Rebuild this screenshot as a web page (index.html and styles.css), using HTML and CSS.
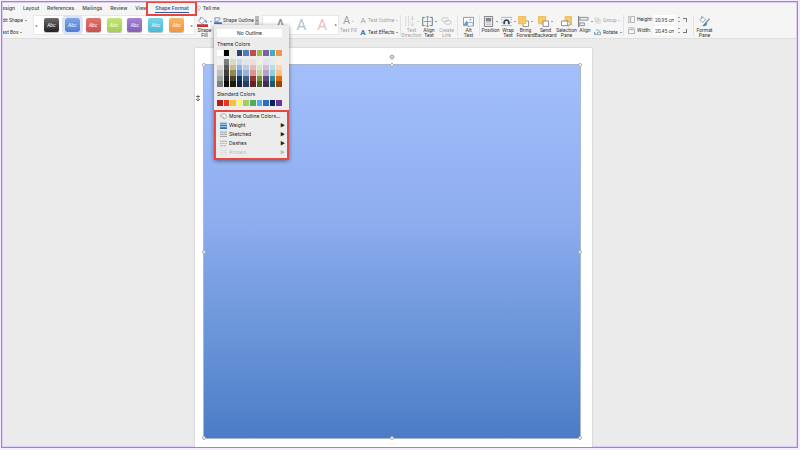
FILE: index.html
```html
<!DOCTYPE html>
<html lang="en">
<head>
<meta charset="utf-8">
<title>Shape Format</title>
<link rel="stylesheet" href="styles.css">
</head>
<body>
<div class="window">
  <nav class="tabs">
    <a href="#">esign</a><a href="#">Layout</a><a href="#">References</a><a href="#">Mailings</a><a href="#">Review</a><a href="#">View</a><a href="#" class="active">Shape Format</a><a href="#" class="tell"><svg class="bulb" viewBox="0 0 6 8"><path d="M2 6C2 4 .8 4 .8 2.500a2.200 2.200 0 0 1 4.400 0C5.200 4 4 4 4 6zM2 7h2" fill="none" stroke="#999" stroke-width=".7"/></svg>Tell me</a>
  </nav>
  <div class="toolbar">
    <div class="stack edit"><button>dit Shape <i class="caret"></i></button><button>ext Box <i class="caret"></i></button></div>
    <div class="gallery styles">
      <button class="arrow" aria-label="Previous">◂</button>
      <button class="style black">Abc</button><button class="style blue chosen">Abc</button><button class="style red">Abc</button><button class="style green">Abc</button><button class="style purple">Abc</button><button class="style aqua">Abc</button><button class="style orange">Abc</button>
      <button class="arrow" aria-label="Next">▸</button>
    </div>
    <button class="tool"><span class="pic"><svg viewBox="0 0 12 12"><path d="M5 1l4 4-4 3.500-3.500-3.500zM4 4V1.500" fill="#fff" stroke="#73849b" stroke-width=".8"/><path d="M9 4c2 1 2 3 1.500 4C9.500 7 9 6 9 4" fill="#477fbd"/><path d="M0 9h12v3H0z" fill="#c23a35"/></svg><i class="caret"></i></span>Shape<br>Fill</button>
    <div class="outline">
      <button class="open"><svg viewBox="0 0 9 8"><path d="M7 1H1v4h4" fill="none" stroke="#6d87a8"/><path d="M3 5l4-4 1 1-4 3z" fill="#7ba9df"/><path d="M0 6h9v2H0z" fill="#3f70bd"/></svg>Shape Outline<span class="drop"><i class="caret"></i></span></button>
      <div class="menu">
        <button class="none">No Outline</button>
        <h2>Theme Colors</h2>
        <div class="swatches base"><i class="c0"></i><i class="c1"></i><i class="c2"></i><i class="c3"></i><i class="c4"></i><i class="c5"></i><i class="c6"></i><i class="c7"></i><i class="c8"></i><i class="c9"></i></div>
        <div class="swatches tints"><i class="t0"></i><i class="t1"></i><i class="t2"></i><i class="t3"></i><i class="t4"></i><i class="t5"></i><i class="t6"></i><i class="t7"></i><i class="t8"></i><i class="t9"></i></div>
        <h2>Standard Colors</h2>
        <div class="swatches base"><i class="s0"></i><i class="s1"></i><i class="s2"></i><i class="s3"></i><i class="s4"></i><i class="s5"></i><i class="s6"></i><i class="s7"></i><i class="s8"></i><i class="s9"></i></div>
        <div class="options">
          <button><svg viewBox="0 0 8 8"><path d="M2 5C0 4 .5 1 3.500.8S8 3 7 5 4.500 7.500 4 6.500 5 5 4 4.500 3 5.500 2 5z" fill="#f5f5f5" stroke="#888" stroke-width=".7"/><path d="M2 3l1-1" stroke="#cf5b54"/></svg>More Outline Colors...</button>
          <button><svg viewBox="0 0 8 8"><path d="M0 .5h8v7H0z" fill="#a9d0ef"/><path d="M0 1.500h8" stroke="#4a8fc9"/><path d="M0 4h8" stroke="#2e7abd" stroke-width="1.500"/><path d="M0 7h8" stroke="#2872b5" stroke-width="2"/></svg>Weight<b>▶</b></button>
          <button><svg viewBox="0 0 8 8"><path d="M0 1.500l2-.5 2 .5 2-.5 2 .5M0 4l2-.5L4 4l2-.5L8 4M0 6.500L2 6l2 .5L6 6l2 .5" fill="none" stroke="#777" stroke-width=".8"/></svg>Sketched<b>▶</b></button>
          <button><svg viewBox="0 0 8 8"><path d="M0 1.500h8" stroke="#888" stroke-width=".7"/><path d="M0 4h8" stroke="#888" stroke-width=".7" stroke-dasharray="2 1"/><path d="M0 6.500h8" stroke="#888" stroke-width=".7" stroke-dasharray="3 1"/></svg>Dashes<b>▶</b></button>
          <button disabled><svg viewBox="0 0 8 8"><path d="M0 1.500h8M0 4h8M0 6.500h8M2 .5v2M6 3v2M2 5.500v2" stroke="#888" stroke-width=".6"/></svg>Arrows<b>▶</b></button>
        </div>
      </div>
    </div>
    <div class="gallery words"><button class="w1">A</button><button class="w2">A</button><button class="w3">A</button><button class="arrow" aria-label="More">▸</button></div>
    <button class="tool dim"><span class="pic"><span class="glyph">A</span><i class="caret"></i></span>Text Fill</button>
    <div class="stack effects"><button class="dim"><span class="small-a">A</span>Text Outline <i class="caret"></i></button><button><span class="small-a on">A</span>Text Effects <i class="caret"></i></button></div>
    <span class="sep"></span>
    <button class="tool dim"><span class="pic"><svg viewBox="0 0 12 12"><path d="M2 0v12M5 0v12M9 0v9" stroke="#888" stroke-width=".8" stroke-dasharray="2 1"/><path d="M7 8l2 3 2-3M8 3h3" fill="none" stroke="#888" stroke-width=".8"/></svg><i class="caret"></i></span>Text<br>Direction</button>
    <button class="tool narrow"><span class="pic"><svg viewBox="0 0 12 12"><path d="M3 1.500H.8v9H3M9 1.500h2.200v9H9" fill="none" stroke="#5e6b78"/><path d="M6 0v12M4 2l2-2 2 2M4 10l2 2 2-2M2 6h8" fill="none" stroke="#4e8fc6" stroke-width=".8"/></svg><i class="caret"></i></span>Align<br>Text</button>
    <button class="tool dim"><span class="pic"><svg viewBox="0 0 12 12"><rect x="1" y="2" width="7" height="4" rx="2" fill="none" stroke="#888"/><rect x="4" y="5" width="7" height="4" rx="2" fill="none" stroke="#888"/></svg></span>Create<br>Link</button>
    <span class="sep"></span>
    <button class="tool"><span class="pic"><svg viewBox="0 0 12 12"><path d="M.5 1.500h11v9H.5z" fill="#fff" stroke="#8195a5"/><path d="M1 9l3-4 3 4 2-3 2 3v1H1z" fill="#6a9cc4"/><circle cx="8" cy="4" r="1" fill="#8195a5"/><path d="M5 7h6v4H8l-2 1v-1H5z" fill="#eef5fb" stroke="#598ebc" stroke-width=".6"/></svg></span>Alt<br>Text</button>
    <span class="sep"></span>
    <button class="tool"><span class="pic"><svg viewBox="0 0 12 12"><path d="M1.500.5h9v11h-9z" fill="#f4f4f4" stroke="#777"/><path d="M3 2h6v4H3z" fill="#80868c"/><path d="M3 7.500h6M3 9.500h6" stroke="#999" stroke-width=".7"/></svg><i class="caret"></i></span>Position</button>
    <button class="tool narrow"><span class="pic"><svg viewBox="0 0 12 12"><path d="M0 1.500h12M0 4h2M10 4h2M0 7h2M10 7h2M0 10.500h12" stroke="#8eb7d6"/><path d="M2.500 9V7c0-4.500 7-4.500 7 0v2H7.500V7c0-2-3-2-3 0v2z" fill="#3b444e"/></svg><i class="caret"></i></span>Wrap<br>Text</button>
    <button class="tool"><span class="pic"><svg viewBox="0 0 12 12"><path d="M5.500 5.500h6v6h-6z" fill="#fff" stroke="#888"/><path d="M.5.5h8v8h-8z" fill="#f6ca65" stroke="#e9b95d"/></svg><i class="caret"></i></span>Bring<br>Forward</button>
    <button class="tool wide"><span class="pic"><svg viewBox="0 0 12 12"><path d="M.5.5h8v8h-8z" fill="#f6ca65" stroke="#e9b95d"/><path d="M5.500 5.500h6v6h-6z" fill="#fff" stroke="#888"/></svg><i class="caret"></i></span>Send<br>Backward</button>
    <button class="tool wide"><span class="pic"><svg viewBox="0 0 12 12"><path d="M4.500.5h7v9h-7z" fill="#f6ca65" stroke="#e9b95d"/><path d="M.5 5.500h7v5h-7z" fill="#fff" stroke="#888"/><path d="M7 5l4 4-2 .5-1 2z" fill="#fff" stroke="#777" stroke-width=".6"/></svg></span>Selection<br>Pane</button>
    <button class="tool narrow"><span class="pic"><svg viewBox="0 0 12 12"><path d="M.8 0v12" stroke="#555"/><path d="M2 1.500h9v3H2zM2 7.500h5v3H2z" fill="#e8eef2" stroke="#6b7780" stroke-width=".8"/></svg><i class="caret"></i></span>Align</button>
    <div class="stack rotate"><button class="dim"><svg viewBox="0 0 8 8"><path d="M1 1h4v4H1zM3 3h4v4H3z" fill="none" stroke="#888" stroke-width=".7"/></svg>Group <i class="caret"></i></button><button><svg viewBox="0 0 8 8"><path d="M.5 3.500l2.500 3H.5zM4 3.500h3.500v3H4z" fill="#dfeaf3" stroke="#5c7d98" stroke-width=".7"/><path d="M2 2c2-2 4-1 4 1" fill="none" stroke="#4e8fc6" stroke-width=".8"/></svg>Rotate <i class="caret"></i></button></div>
    <span class="sep"></span>
    <div class="size">
      <svg viewBox="0 0 8 8"><path d="M3 .5h4.500v7H3zM1 .5v7M0 1.500L1 .5l1 1M0 6.500l1 1 1-1" fill="none" stroke="#888" stroke-width=".7"/></svg><label for="h">Height:</label><input id="h" value="20,95 cm"><span class="step"><i class="up"></i><i class="caret"></i></span><span class="link top"></span>
      <svg viewBox="0 0 8 8"><path d="M.5 3h7v4.500h-7zM.5 1h7" fill="none" stroke="#888" stroke-width=".7"/></svg><label for="w">Width:</label><input id="w" value="20,45 cm"><span class="step"><i class="up"></i><i class="caret"></i></span><span class="link"></span>
    </div>
    <span class="sep"></span>
    <button class="tool"><span class="pic"><svg viewBox="0 0 12 12"><path d="M4 1l3 3-3 3-3-3zM3 3V0" fill="#fff" stroke="#6585a5" stroke-width=".8"/><path d="M11.500 3L7 8" stroke="#8b8f94" stroke-width="1.500"/><path d="M7.500 7L9 8.500C8 11 6 11.500 3 11c2-.5 2-3 4.500-4z" fill="#4687c3"/></svg></span>Format<br>Pane</button>
  </div>
  <main class="canvas">
    <div class="page">
      <span class="anchor"><svg viewBox="0 0 6 8"><path d="M3 1v6M1 2.500h4M1 5l2 2 2-2" fill="none" stroke="#555" stroke-width=".8"/></svg></span>
      <div class="shape"><i class="turn"></i><i class="h nw"></i><i class="h n"></i><i class="h ne"></i><i class="h w"></i><i class="h e"></i><i class="h sw"></i><i class="h s"></i><i class="h se"></i></div>
    </div>
  </main>
</div>
</body>
</html>
```
FILE: styles.css
```css
* { box-sizing: border-box; }
html, body { height: 100%; margin: 0; }
body { background: #f3edfc; padding: 1px 2px 1px 1px; font: 5px/5px Roboto, "Liberation Sans", sans-serif; color: #333; }
button { font: inherit; color: inherit; background: none; border: 0; padding: 0; margin: 0; white-space: nowrap; }
svg { display: block; flex: none; }
.window { height: calc(100% - 1px); border: 1px solid #a47fdc; outline: 1px solid #dccdf5; outline-offset: -2px; display: flex; flex-direction: column; overflow: hidden; background: #f5f5f5; }

.tabs { display: flex; flex: none; gap: 8px; height: 12px; align-items: center; font-family: Inter, "Liberation Sans", sans-serif; line-height: 8px; font-weight: 500; }
.tabs a { color: #444; text-decoration: none; white-space: nowrap; }
.tabs .active { position: relative; color: #315a9c; font-weight: 600; border-bottom: 1px solid #315a9c; }
.tabs .active::after { content: ""; position: absolute; inset: -3px -8px -4px -9px; border: 2px solid #e8473f; z-index: 3; }
.tabs .tell { display: flex; gap: 2px; align-items: center; }
.bulb { width: 4px; height: 7px; }

.toolbar { display: flex; flex: none; height: 25px; align-items: flex-start; padding-top: 1px; border-bottom: 1px solid #dedede; }
.caret { display: inline-block; flex: none; border: 1px solid transparent; border-top-color: #444; border-bottom: 0; vertical-align: middle; }
.up { border: 1px solid transparent; border-bottom-color: #444; border-top: 0; }
.dim { opacity: .45; }
.stack { display: flex; flex-direction: column; gap: 4px; flex: none; padding-top: 1px; }
.stack button { display: flex; align-items: center; gap: 2px; height: 8px; }
.stack svg { width: 7px; height: 7px; }
.edit { width: 31px; }
.gallery { display: flex; flex: none; align-items: center; height: 20px; background: #fff; border: 1px solid #e7e7e7; }
.arrow { width: 4px; color: #666; font-size: 4px; text-align: center; }
.styles { width: 162px; justify-content: space-between; }
.style { width: 15px; height: 14px; border-radius: 2px; color: #fff; font-style: italic; box-shadow: 0 1px 1px #0004; }
.black { background: linear-gradient(#6b6b6b, #222); }
.blue { background: linear-gradient(#7ba6ea, #4e7fd0); }
.red { background: linear-gradient(#e0736f, #c9514d); }
.green { background: linear-gradient(#c3e576, #a4cf53); }
.purple { background: linear-gradient(#a485d1, #8560b5); }
.aqua { background: linear-gradient(#76d6ea, #4cb9d4); }
.orange { background: linear-gradient(#fbb565, #f1963c); }
.chosen { outline: 3px solid #dbe4f2; }

.tool { flex: none; width: 19px; display: flex; flex-direction: column; align-items: center; text-align: center; }
.narrow { width: 16px; }
.wide { width: 21px; }
.pic { display: flex; align-items: center; justify-content: center; gap: 2px; height: 12px; margin-bottom: 1px; }
.pic svg { width: 11px; height: 11px; }
.glyph { font-size: 11px; line-height: 12px; }

.outline { position: relative; flex: none; width: 46px; }
.open { display: flex; align-items: center; gap: 1px; height: 10px; }
.open svg { width: 8px; height: 7px; }
.drop { width: 4px; height: 9px; display: grid; place-items: center; background: #bbb; }
.menu { position: absolute; z-index: 2; left: 0; top: 10px; width: 75px; background: #ececec; border-radius: 0 0 3px 3px; box-shadow: 0 1px 4px #0007; padding-top: 4px; font-family: Inter, "Liberation Sans", sans-serif; line-height: 7px; color: #222; }
.none { display: block; width: 65px; height: 8px; margin-left: 3px; background: #fff; }
.menu h2 { margin: 4px 3px 2px; font-size: 5px; line-height: 7px; font-weight: 400; }
.swatches { display: grid; grid-template-columns: repeat(10, 1fr); margin: 0 7px 0 3px; }
.base { height: 6px; column-gap: 1px; }
.tints { height: 28px; margin-top: 3px; column-gap: 1px; }
.c0 { background: #fff; } .c1 { background: #000; } .c2 { background: #eeece1; } .c3 { background: #24487e; } .c4 { background: #4b7cbf; }
.c5 { background: #bd504c; } .c6 { background: #98b954; } .c7 { background: #7e61a0; } .c8 { background: #47a8c4; } .c9 { background: #f19645; }
.t0 { background: linear-gradient(#f2f2f2 20%, #d8d8d8 0 40%, #bfbfbf 0 60%, #a5a5a5 0 80%, #7f7f7f 0); }
.t1 { background: linear-gradient(#7f7f7f 20%, #595959 0 40%, #3f3f3f 0 60%, #262626 0 80%, #0c0c0c 0); }
.t2 { background: linear-gradient(#ddd9c3 20%, #c4bd97 0 40%, #938953 0 60%, #494429 0 80%, #1d1b10 0); }
.t3 { background: linear-gradient(#c6d9f0 20%, #8db3e2 0 40%, #548dd4 0 60%, #17365d 0 80%, #0f243e 0); }
.t4 { background: linear-gradient(#dbe5f1 20%, #b8cce4 0 40%, #95b3d7 0 60%, #366092 0 80%, #244061 0); }
.t5 { background: linear-gradient(#f2dcdb 20%, #e5b9b7 0 40%, #d99694 0 60%, #953734 0 80%, #632423 0); }
.t6 { background: linear-gradient(#ebf1dd 20%, #d7e3bc 0 40%, #c3d69b 0 60%, #76923c 0 80%, #4f6128 0); }
.t7 { background: linear-gradient(#e5e0ec 20%, #ccc1d9 0 40%, #b2a2c7 0 60%, #5f497a 0 80%, #3f3151 0); }
.t8 { background: linear-gradient(#dbeef3 20%, #b7dde8 0 40%, #92cddc 0 60%, #31859b 0 80%, #205867 0); }
.t9 { background: linear-gradient(#fdeada 20%, #fbd5b5 0 40%, #fac08f 0 60%, #e36c09 0 80%, #974806 0); }
.s0 { background: #b32018; } .s1 { background: #ea3323; } .s2 { background: #f5c142; } .s3 { background: #fff955; } .s4 { background: #9fce63; }
.s5 { background: #4eac5b; } .s6 { background: #4faeea; } .s7 { background: #2f6eba; } .s8 { background: #06215c; } .s9 { background: #68349a; }
.options { margin-top: 4px; border: 2px solid #e8473f; padding: 0 2px 1px 4px; }
.options button { display: flex; align-items: center; gap: 2px; width: 100%; height: 9px; }
.options button:disabled { opacity: .25; }
.options svg { width: 7px; height: 7px; }
.options b { margin-left: auto; }

.words { width: 77px; margin-left: 2px; justify-content: flex-end; gap: 11px; }
.words button { font-size: 15px; line-height: 16px; }
.words .arrow { font-size: 4px; margin-left: -4px; }
.w1 { color: #888; } .w2 { color: #b4bfd2; } .w3 { color: #e4c2c4; }
.effects { width: 39px; margin-left: 2px; }
.small-a { width: 6px; font-size: 8px; }
.on { color: #3679bd; font-weight: 700; }
.sep { flex: none; width: 1px; height: 21px; margin: 0 1px; background: #e3e3e3; }
.rotate { width: 28px; margin-left: 1px; }
.size { flex: none; display: grid; grid-template-columns: 7px 15px 21px 4px 5px; column-gap: 2px; row-gap: 2px; align-items: center; width: 67px; padding-left: 3px; }
.size svg { width: 7px; height: 7px; }
.size input { width: 100%; height: 9px; border: 0; padding: 0 1px; background: #fff; font: inherit; color: #333; }
.step { display: grid; gap: 3px; justify-items: center; }
.link { width: 4px; height: 4px; border: solid #777; border-width: 0 1px 1px 0; }
.link.top { border-width: 1px 1px 0 0; }

.canvas { flex: 1; display: grid; grid-template-columns: 193fr 397fr 205fr; padding-top: 9px; background: #ebebeb; }
.page { position: relative; grid-column: 2; background: #fff; box-shadow: 0 0 2px #0003; padding: 16px 11px 8px 8px; display: flex; }
.anchor { position: absolute; left: 0; top: 46px; }
.anchor svg { width: 6px; height: 8px; }
.shape { position: relative; flex: 1; border: 1px solid #a9b6cf; background: linear-gradient(#a3bffb, #8faef0 40%, #6c97da 70%, #4c7cc7); }
.h, .turn { position: absolute; width: 4px; height: 4px; background: #fff; border: 1px solid #aaa; border-radius: 50%; transform: translate(-50%, -50%); }
.nw, .w, .sw { left: 0; } .n, .s, .turn { left: 50%; } .ne, .e, .se { left: 100%; }
.nw, .n, .ne { top: 0; } .w, .e { top: 50%; } .sw, .s, .se { top: 100%; }
.turn { top: -8px; width: 5px; height: 5px; background: #ccc; }
```
